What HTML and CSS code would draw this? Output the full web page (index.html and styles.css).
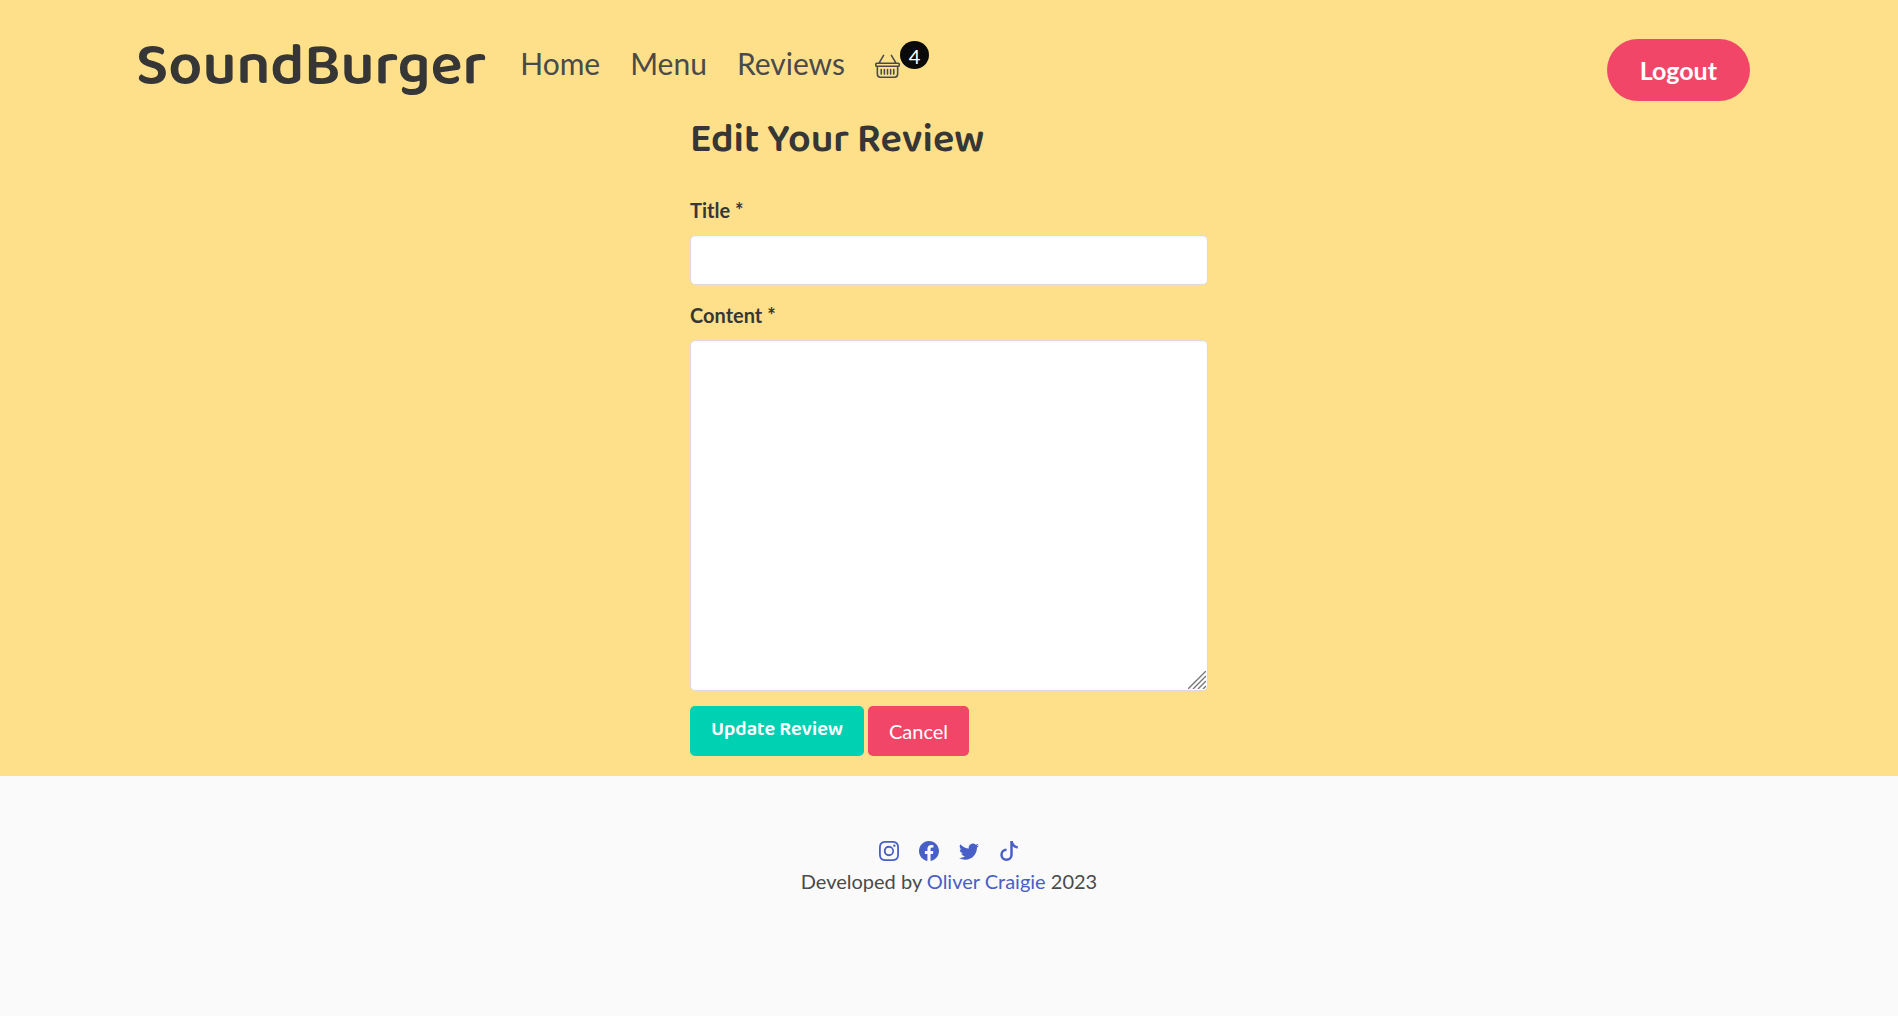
FILE: index.html
```html
<!DOCTYPE html>
<html lang="en">
<head>
<meta charset="utf-8">
<meta name="viewport" content="width=device-width, initial-scale=1">
<title>SoundBurger</title>
<link rel="stylesheet" href="styles.css">
</head>
<body>
<header class="navbar">
  <a class="brand" href="#">SoundBurger</a>
  <nav class="links" aria-label="Main">
    <a href="#">Home</a>
    <a href="#">Menu</a>
    <a href="#">Reviews</a>
    <a class="basket" href="#" aria-label="Basket, 4 items">
      <svg viewBox="0 0 16 16" fill="currentColor" aria-hidden="true"><path d="M5.757 1.071a.5.5 0 0 1 .172.686L3.383 6h9.234L10.07 1.757a.5.5 0 1 1 .858-.514L13.783 6H15a1 1 0 0 1 1 1v1a1 1 0 0 1-1 1v4.500a2.500 2.500 0 0 1-2.500 2.500h-9A2.500 2.500 0 0 1 1 13.500V9a1 1 0 0 1-1-1V7a1 1 0 0 1 1-1h1.217L5.070 1.243a.5.5 0 0 1 .686-.172zM2 9v4.500A1.500 1.500 0 0 0 3.500 15h9a1.500 1.500 0 0 0 1.500-1.500V9H2zM1 7v1h14V7H1zm3 3a.5.5 0 0 1 .5.5v3a.5.5 0 0 1-1 0v-3A.5.5 0 0 1 4 10zm2 0a.5.5 0 0 1 .5.5v3a.5.5 0 0 1-1 0v-3A.5.5 0 0 1 6 10zm2 0a.5.5 0 0 1 .5.5v3a.5.5 0 0 1-1 0v-3A.5.5 0 0 1 8 10zm2 0a.5.5 0 0 1 .5.5v3a.5.5 0 0 1-1 0v-3a.5.5 0 0 1 .5-.5zm2 0a.5.5 0 0 1 .5.5v3a.5.5 0 0 1-1 0v-3a.5.5 0 0 1 .5-.5z"/></svg>
      <span class="badge">4</span>
    </a>
  </nav>
  <a class="logout" href="#">Logout</a>
</header>
<main class="editor">
  <h1>Edit Your Review</h1>
  <form class="review-form">
    <div class="field">
      <label for="title">Title *</label>
      <input class="control" id="title" name="title" type="text" required>
    </div>
    <div class="field">
      <label for="content">Content *</label>
      <div class="resizable">
        <textarea class="control" id="content" name="content" required></textarea>
        <svg class="grip" viewBox="0 0 18 18" fill="none" stroke="#777" stroke-width="1.4" aria-hidden="true"><path d="M0 18L18 0M5 18L18 5M10 18L18 10M15 18L18 15"/></svg>
      </div>
    </div>
    <div class="actions">
      <button class="button update" type="submit">Update Review</button>
      <a class="button cancel" href="#">Cancel</a>
    </div>
  </form>
</main>
<footer class="footer">
  <div class="social">
    <a href="#" aria-label="Instagram"><svg viewBox="0 0 16 16" fill="currentColor"><path d="M8 0C5.829 0 5.556.01 4.703.048 3.850.088 3.269.222 2.760.420a3.917 3.917 0 0 0-1.417.923A3.927 3.927 0 0 0 .420 2.760C.222 3.268.087 3.850.048 4.700.010 5.555 0 5.827 0 8.001c0 2.172.010 2.444.048 3.297.040.852.174 1.433.372 1.942.205.526.478.972.923 1.417.444.445.890.719 1.416.923.510.198 1.090.333 1.942.372C5.555 15.990 5.827 16 8 16s2.444-.010 3.298-.048c.851-.040 1.434-.174 1.943-.372a3.916 3.916 0 0 0 1.416-.923c.445-.445.718-.891.923-1.417.197-.509.332-1.090.372-1.942C15.990 10.445 16 10.173 16 8s-.010-2.445-.048-3.299c-.040-.851-.175-1.433-.372-1.941a3.926 3.926 0 0 0-.923-1.417A3.911 3.911 0 0 0 13.240.420c-.510-.198-1.092-.333-1.943-.372C10.443.010 10.172 0 7.998 0h.003zm-.717 1.442h.718c2.136 0 2.389.007 3.232.046.780.035 1.204.166 1.486.275.373.145.640.319.920.599.280.280.453.546.598.920.110.281.240.705.275 1.485.039.843.047 1.096.047 3.231s-.008 2.389-.047 3.232c-.035.780-.166 1.203-.275 1.485a2.470 2.470 0 0 1-.599.919c-.280.280-.546.453-.920.598-.280.110-.704.240-1.485.276-.843.038-1.096.047-3.232.047s-2.390-.009-3.233-.047c-.780-.036-1.203-.166-1.485-.276a2.478 2.478 0 0 1-.920-.598 2.480 2.480 0 0 1-.600-.920c-.109-.281-.240-.705-.275-1.485-.038-.843-.046-1.096-.046-3.233 0-2.136.008-2.388.046-3.231.036-.780.166-1.204.276-1.486.145-.373.319-.640.599-.920.280-.280.546-.453.920-.598.282-.110.705-.240 1.485-.276.738-.034 1.024-.044 2.515-.045v.002zm4.988 1.328a.960.960 0 1 0 0 1.920.960.960 0 0 0 0-1.920zm-4.270 1.122a4.109 4.109 0 1 0 0 8.217 4.109 4.109 0 0 0 0-8.217zm0 1.441a2.667 2.667 0 1 1 0 5.334 2.667 2.667 0 0 1 0-5.334z"/></svg></a>
    <a href="#" aria-label="Facebook"><svg viewBox="0 0 16 16" fill="currentColor"><path d="M16 8.049c0-4.446-3.582-8.050-8-8.050C3.580 0-.002 3.603-.002 8.050c0 4.017 2.926 7.347 6.750 7.951v-5.625h-2.030V8.050H6.750V6.275c0-2.017 1.195-3.131 3.022-3.131.876 0 1.791.157 1.791.157v1.980h-1.009c-.993 0-1.303.621-1.303 1.258v1.510h2.218l-.354 2.326H9.250V16c3.824-.604 6.750-3.934 6.750-7.951z"/></svg></a>
    <a href="#" aria-label="Twitter"><svg viewBox="0 0 16 16" fill="currentColor"><path d="M5.026 15c6.038 0 9.341-5.003 9.341-9.334 0-.140 0-.282-.006-.422A6.685 6.685 0 0 0 16 3.542a6.658 6.658 0 0 1-1.889.518 3.301 3.301 0 0 0 1.447-1.817 6.533 6.533 0 0 1-2.087.793A3.286 3.286 0 0 0 7.875 6.030a9.325 9.325 0 0 1-6.767-3.429 3.289 3.289 0 0 0 1.018 4.382A3.323 3.323 0 0 1 .640 6.575v.045a3.288 3.288 0 0 0 2.632 3.218 3.203 3.203 0 0 1-.865.115 3.230 3.230 0 0 1-.614-.057 3.283 3.283 0 0 0 3.067 2.277A6.588 6.588 0 0 1 .780 13.580a6.320 6.320 0 0 1-.780-.045A9.344 9.344 0 0 0 5.026 15z"/></svg></a>
    <a href="#" aria-label="TikTok"><svg viewBox="0 0 16 16" fill="currentColor"><path d="M9 0h1.980c.144.715.540 1.617 1.235 2.512C12.895 3.389 13.797 4 15 4v2c-1.753 0-3.070-.814-4-1.829V11a5 5 0 1 1-5-5v2a3 3 0 1 0 3 3V0Z"/></svg></a>
  </div>
  <p>Developed by <a href="#">Oliver Craigie</a> 2023</p>
</footer>
</body>
</html>
```
FILE: styles.css
```css
* { box-sizing: border-box; }

body {
  margin: 0;
  background: #fafafa;
  color: #4a4a4a;
  font: 20px/30px Lato, sans-serif;
}

a { color: #485fc7; text-decoration: none; }

.navbar {
  display: flex;
  align-items: center;
  padding: 15px 148px 0 136px;
  min-height: 111px;
  background: #ffe08a;
}

.brand, h1, .update {
  font-family: "Baloo 2", "Noto Sans", sans-serif;
  font-weight: 600;
  color: #363636;
}

.brand { padding-top: 6px; font-size: 60px; line-height: 66px; }

.links {
  display: flex;
  align-items: center;
  gap: 30px;
  margin-left: 34px;
  font-size: 30px;
  line-height: 45px;
}

.links a { color: #4a4a4a; }

.basket { position: relative; }
.basket svg { display: block; width: 25px; height: 25px; margin-top: 4px; }

.badge {
  position: absolute;
  left: 25px;
  top: -8px;
  width: 29px;
  height: 28px;
  border-radius: 50%;
  background: #0a0a0a;
  color: #fff;
  font-size: 20px;
  line-height: 30px;
  text-align: center;
}

.logout {
  margin-left: auto;
  margin-top: 14px;
  padding: 12px 33px;
  border-radius: 31px;
  background: #f14668;
  color: #fff;
  font-size: 25px;
  line-height: 38px;
  font-weight: 700;
}

.editor {
  padding: 4px 20px 20px;
  background: #ffe08a;
}

h1 {
  max-width: 518px;
  margin: 0 auto 30px;
  font-size: 40px;
  line-height: 50px;
}

.review-form {
  display: flex;
  flex-direction: column;
  gap: 15px;
  max-width: 518px;
  margin: 0 auto;
}

.field { display: flex; flex-direction: column; gap: 10px; }

label { color: #363636; font-weight: 700; }

.control {
  display: block;
  width: 100%;
  height: 50px;
  padding: 10px 15px;
  border: 1px solid #dbdbdb;
  border-radius: 5px;
  background: #fff;
  box-shadow: inset 0 1px 2px rgba(10, 10, 10, 0.05);
  color: #363636;
  font: inherit;
}

textarea.control { height: 351px; resize: vertical; }
textarea::-webkit-resizer { background: transparent; }

.resizable { position: relative; }

.grip {
  position: absolute;
  right: 2px;
  bottom: 2px;
  width: 18px;
  height: 18px;
  pointer-events: none;
}

.actions { display: flex; gap: 4px; }

.button {
  height: 50px;
  padding: 10px 21px;
  border: 0;
  border-radius: 5px;
  color: #fff;
  font-size: 20px;
  line-height: 30px;
}

.update {
  padding-bottom: 14px;
  background: #00d1b2;
  font-weight: 600;
  line-height: 26px;
}

.cancel { background: #f14668; }

.footer { padding: 60px 30px 120px; text-align: center; }
.footer p { margin: 0; }

.social { display: flex; justify-content: center; gap: 20px; padding: 5px 0; }
.social svg { display: block; width: 20px; height: 20px; }
```
